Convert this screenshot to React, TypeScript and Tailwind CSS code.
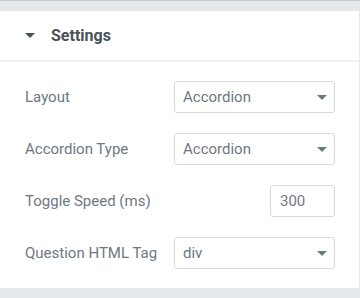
import React from "react";

function Caret({ className }: { className?: string }) {
  return (
    <svg width="10" height="5" viewBox="0 0 10 5" className={className}>
      <path d="M0 0h10L5 5z" fill="currentColor" />
    </svg>
  );
}

function SelectBox({ value }: { value: string }) {
  return (
    <div className="flex h-[32px] w-[161px] items-center justify-between rounded-[3px] border border-[#d5dadf] bg-white pl-[8px] pr-[7px]">
      <span className="text-[15px] text-[#6d7882]">{value}</span>
      <Caret className="text-[#6d7882]" />
    </div>
  );
}

function Row({ label, children }: { label: string; children: React.ReactNode }) {
  return (
    <div className="flex h-[32px] items-center justify-between">
      <span className="text-[15px] text-[#6d7882]">{label}</span>
      {children}
    </div>
  );
}

export default function App() {
  return (
    <div
      className="flex h-[298px] w-[360px] flex-col bg-[#e6e9ec]"
      style={{ fontFamily: "Roboto, 'Liberation Sans', sans-serif" }}
    >
      <div className="h-[11px] border-t border-[#c6cacf]" />
      <div className="mr-[1px] bg-white">
        <div className="flex h-[49px] items-center gap-[16px] pl-[25px]">
          <Caret className="text-[#495157]" />
          <span className="text-[16px] font-bold text-[#495157]">Settings</span>
        </div>
        <div className="h-[2px] bg-[#f1f1f1]" />
        <div className="flex flex-col gap-[20px] pb-[19px] pl-[25px] pr-[24px] pt-[19px]">
          <Row label="Layout">
            <SelectBox value="Accordion" />
          </Row>
          <Row label="Accordion Type">
            <SelectBox value="Accordion" />
          </Row>
          <Row label="Toggle Speed (ms)">
            <div className="flex h-[32px] w-[65px] items-center rounded-[3px] border border-[#d5dadf] bg-white pl-[9px]">
              <span className="text-[15px] text-[#6d7882]">300</span>
            </div>
          </Row>
          <Row label="Question HTML Tag">
            <SelectBox value="div" />
          </Row>
        </div>
      </div>
    </div>
  );
}
